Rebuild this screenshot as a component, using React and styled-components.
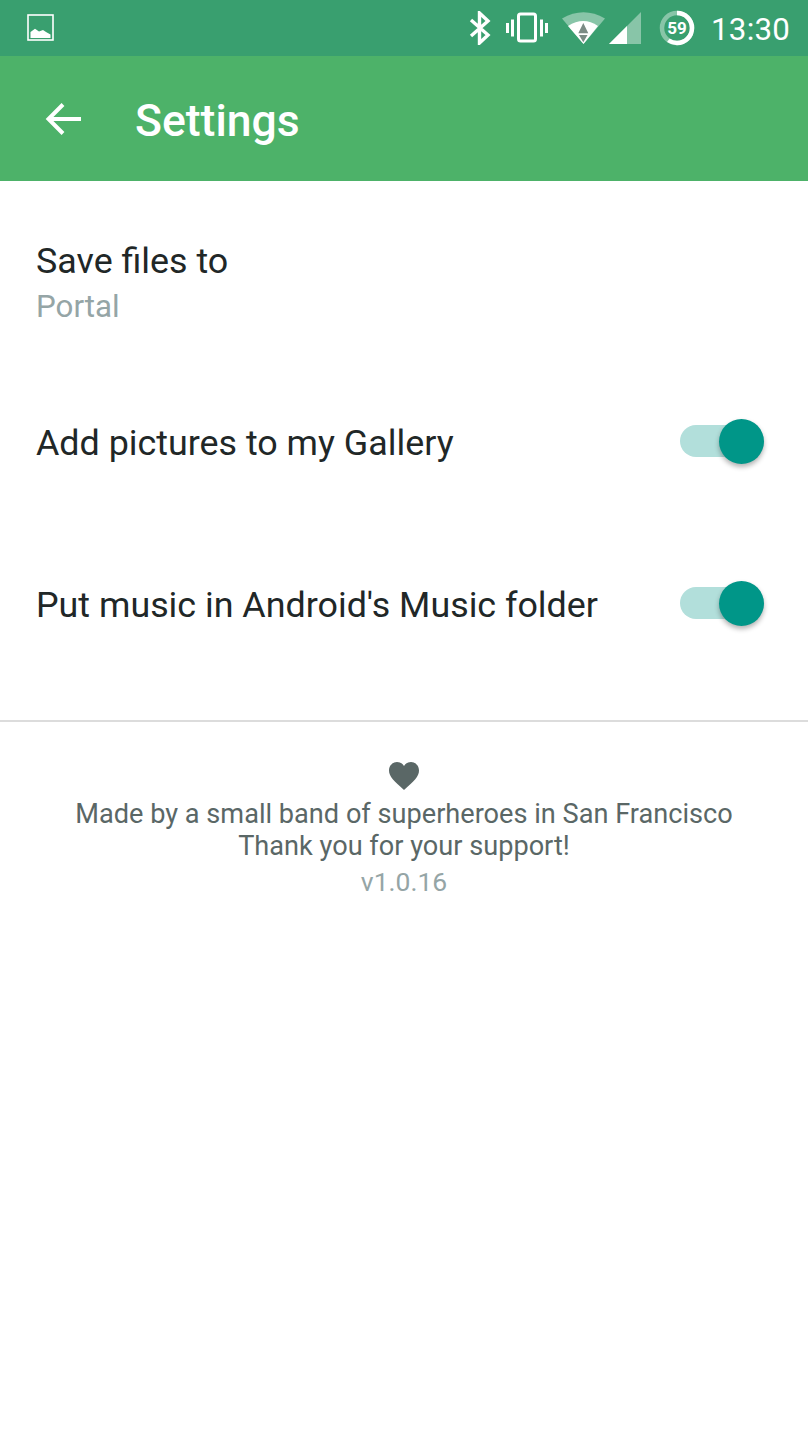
import React from "react";
import styled, { createGlobalStyle } from "styled-components";

const GlobalStyle = createGlobalStyle`
  html, body {
    margin: 0;
    padding: 0;
    background: #fff;
    font-family: Roboto, "Liberation Sans", sans-serif;
  }
`;

const Page = styled.div`
  width: 808px;
  height: 1436px;
  overflow: hidden;
  background: #fff;
`;

const StatusBar = styled.div`
  height: 56px;
  display: flex;
  align-items: center;
  padding: 0 18px 0 27px;
  background: #399f6f;
  color: #fff;
`;

const StatusIcons = styled.div`
  margin-left: auto;
  display: flex;
  align-items: center;
`;

const Clock = styled.span`
  margin-left: 16px;
  padding-top: 2px;
  font-size: 31.3px;
  letter-spacing: 0.2px;
`;

const AppBar = styled.header`
  height: 125px;
  display: flex;
  align-items: center;
  padding: 0 0 0 44px;
  background: #4db269;
  color: #fff;
`;

const Title = styled.h1`
  margin: 0 0 0 53px;
  padding-top: 5px;
  font-size: 44.5px;
  font-weight: 500;
`;

const List = styled.div`
  display: flex;
  flex-direction: column;
  padding: 57px 44px 0 36px;
`;

const Row = styled.div`
  display: flex;
  align-items: ${(p) => (p.$top ? "flex-start" : "center")};
  justify-content: space-between;
  height: ${(p) => p.$height}px;
`;

const Stack = styled.div`
  display: flex;
  flex-direction: column;
`;

const Label = styled.div`
  padding-top: ${(p) => (p.$shift ? 4 : 0)}px;
  font-size: 35.85px;
  line-height: 46px;
  color: #212727;
`;

const Sub = styled.div`
  font-size: 31.3px;
  line-height: 46px;
  color: #95a5a6;
`;

const Track = styled.div`
  position: relative;
  width: 84px;
  height: 32px;
  border-radius: 16px;
  background: #b2dfdb;
`;

const Knob = styled.div`
  position: absolute;
  right: 0;
  top: -6px;
  width: 45px;
  height: 45px;
  border-radius: 50%;
  background: #009688;
  box-shadow: 0 3px 5px rgba(0, 0, 0, 0.3);
`;

const Divider = styled.hr`
  margin: 35px 0 0;
  border: 0;
  height: 2px;
  background: #dcdcdc;
`;

const Footer = styled.footer`
  display: flex;
  flex-direction: column;
  align-items: center;
  padding-top: 39px;
  color: #5a6766;
  font-size: 27.15px;
  line-height: 32px;
`;

const HeartWrap = styled.div`
  height: 30px;
  margin-bottom: 7px;
`;

const Version = styled.div`
  margin-top: 4px;
  font-size: 26.5px;
  color: #95a5a6;
`;

const Gap = styled.svg`
  margin-left: ${(p) => p.$left || 0}px;
`;

function GalleryIcon() {
  return (
    <svg width="28" height="28" viewBox="0 0 28 28">
      <rect x="1" y="1" width="25" height="25" fill="none" stroke="#fff" strokeWidth="1.6" />
      <path d="M3.500 24v-6l4.500-3.300 4 2.800 4-1.500 3 2 4.500 2.500V24z" fill="#fff" />
    </svg>
  );
}

function BluetoothIcon() {
  return (
    <svg width="24" height="34" viewBox="0 0 24 34">
      <path d="M3 9l17 15-8.500 8V2L20 10 3 25" fill="none" stroke="#fff" strokeWidth="3.400" />
    </svg>
  );
}

function VibrateIcon() {
  return (
    <Gap $left={14} width="42" height="32" viewBox="0 0 42 32">
      <rect x="12.500" y="2" width="17" height="27" rx="2" fill="none" stroke="#fff" strokeWidth="3" />
      <path d="M1.500 11v10M6.500 7.500v17M35.500 7.500v17M40.500 11v10" stroke="#fff" strokeWidth="3" fill="none" />
    </Gap>
  );
}

function WifiIcon() {
  return (
    <Gap $left={12} width="46" height="32" viewBox="0 0 46 32">
      <path d="M2 6.500Q23.500-6 45 6.500L23.500 32z" fill="#fff" fillOpacity="0.4" />
      <path d="M8 14Q23.500 4 38 14L23.500 32z" fill="#fff" />
      <path d="M23.300 11l5 10.300h-10zM19 23h8.500l-4.200 7.300z" fill="#7b8b85" />
    </Gap>
  );
}

function SignalIcon() {
  return (
    <Gap $left={3} width="32" height="32" viewBox="0 0 32 32">
      <path d="M32 0v32H0z" fill="#fff" fillOpacity="0.4" />
      <path d="M18 14v18H0z" fill="#fff" />
    </Gap>
  );
}

function BatteryIcon() {
  return (
    <Gap $left={18} width="36" height="36" viewBox="0 0 36 36">
      <circle cx="18" cy="18" r="15" fill="none" stroke="#fff" strokeOpacity="0.4" strokeWidth="4.500" />
      <circle cx="18" cy="18" r="15" fill="none" stroke="#fff" strokeWidth="4.500" strokeDasharray="56 95" transform="rotate(-90 18 18)" />
      <text x="18" y="24" textAnchor="middle" fontSize="17" fontWeight="700" fontFamily="Roboto, sans-serif" fill="#fff">59</text>
    </Gap>
  );
}

function BackIcon() {
  return (
    <svg width="38" height="36" viewBox="0 0 38 36">
      <path d="M37 18H5M19 3.500 4.500 18 19 32.500" fill="none" stroke="#fff" strokeWidth="4" />
    </svg>
  );
}

function HeartIcon() {
  return (
    <svg width="32" height="30" viewBox="0 0 32 30">
      <path d="M16 29C6 20 1 15.500 1 9.500 1 4.500 4.800 1 9 1c3 0 5.500 1.500 7 4 1.500-2.500 4-4 7-4 4.200 0 8 3.500 8 8.500 0 6-5 10.500-15 19.500z" fill="#5a6766" />
    </svg>
  );
}

function Switch() {
  return (
    <Track>
      <Knob />
    </Track>
  );
}

export default function App() {
  return (
    <Page>
      <GlobalStyle />
      <StatusBar>
        <GalleryIcon />
        <StatusIcons>
          <BluetoothIcon />
          <VibrateIcon />
          <WifiIcon />
          <SignalIcon />
          <BatteryIcon />
          <Clock>13:30</Clock>
        </StatusIcons>
      </StatusBar>
      <AppBar>
        <BackIcon />
        <Title>Settings</Title>
      </AppBar>
      <List>
        <Row $top $height={123}>
          <Stack>
            <Label>Save files to</Label>
            <Sub>Portal</Sub>
          </Stack>
        </Row>
        <Row $height={160}>
          <Label $shift>Add pictures to my Gallery</Label>
          <Switch />
        </Row>
        <Row $height={164}>
          <Label $shift>Put music in Android's Music folder</Label>
          <Switch />
        </Row>
      </List>
      <Divider />
      <Footer>
        <HeartWrap>
          <HeartIcon />
        </HeartWrap>
        <div>Made by a small band of superheroes in San Francisco</div>
        <div>Thank you for your support!</div>
        <Version>v1.0.16</Version>
      </Footer>
    </Page>
  );
}
